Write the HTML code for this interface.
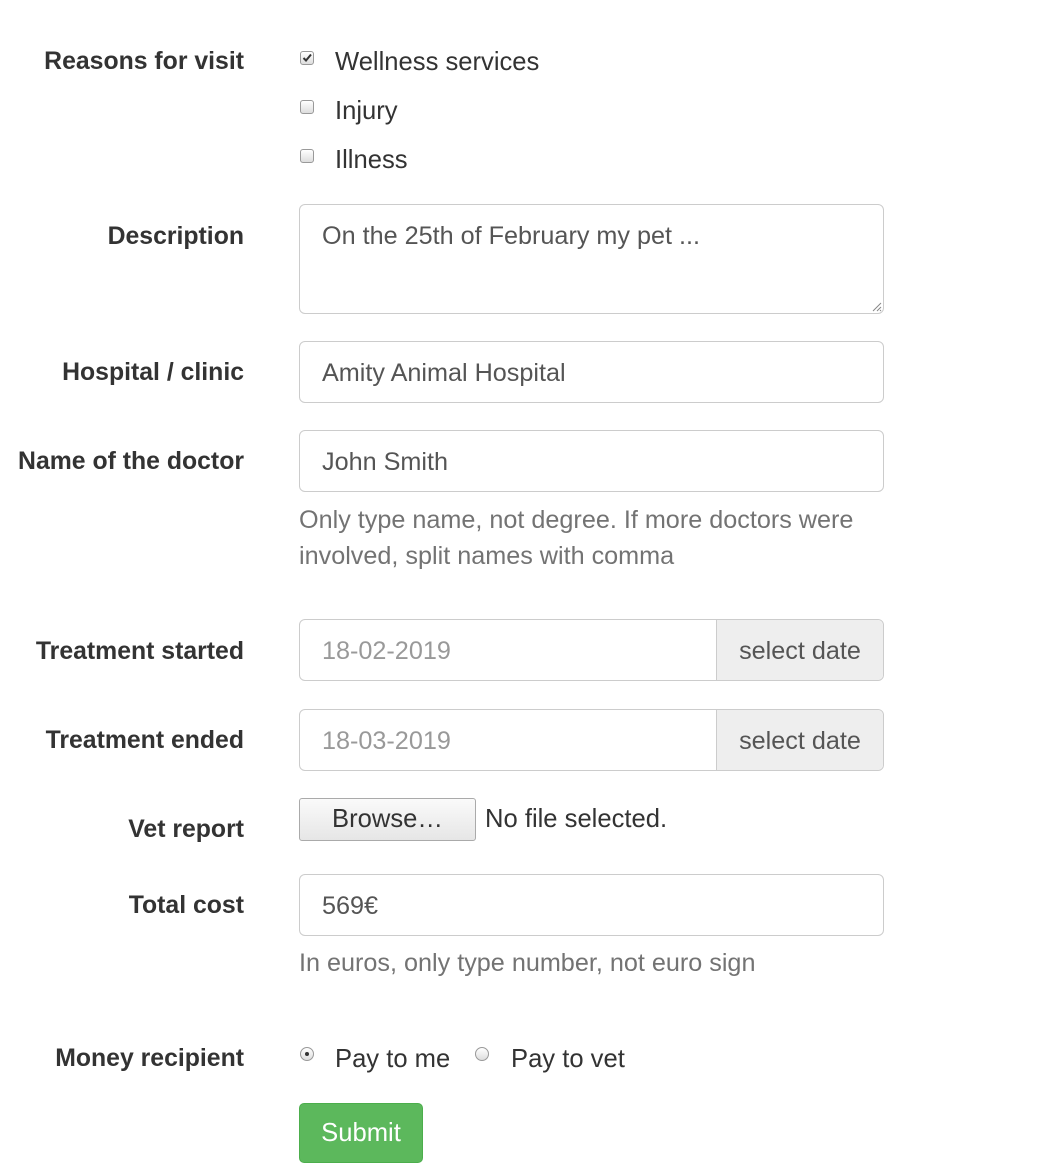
<!DOCTYPE html>
<html><head><style>
body{margin:0;width:1061px;height:1170px;background:#fff;font-family:"Liberation Sans",sans-serif;font-size:25.6px;color:#333;position:relative;overflow:hidden}
.l{position:absolute;right:817px;font-weight:bold;line-height:30px;white-space:nowrap;font-size:24.8px}
.t{position:absolute;line-height:30px;white-space:nowrap}
.in{position:absolute;left:299px;width:583px;height:60px;border:1px solid #ccc;border-radius:6px;box-sizing:content-box;color:#555;font-size:25.2px}
.in span{position:absolute;left:22px;top:16px;line-height:30px}
.cb{position:absolute;left:300px;width:12px;height:12px;border:1px solid #999;border-radius:3px;background:linear-gradient(#fff,#ddd)}
.rb{position:absolute;width:12px;height:12px;border:1px solid #999;border-radius:50%;background:linear-gradient(#fff,#ddd)}
.help{position:absolute;left:299px;color:#737373;line-height:36px;font-size:25.2px}
.addon{position:absolute;right:0;top:0;width:166px;height:60px;background:#eee;border-left:1px solid #ccc;border-radius:0 6px 6px 0;text-align:center;line-height:62px;color:#555}
</style></head><body>
<div class="l" style="top:47px">Reasons for visit</div>
<div class="cb" style="top:51px"><svg width="12" height="12" style="position:absolute;left:0;top:0"><path d="M2.5 6 L5 8.5 L10 2.5" stroke="#333" stroke-width="2" fill="none"/></svg></div>
<div class="t" style="left:335px;top:47px">Wellness services</div>
<div class="cb" style="top:100px"></div>
<div class="t" style="left:335px;top:96px">Injury</div>
<div class="cb" style="top:149px"></div>
<div class="t" style="left:335px;top:145px">Illness</div>

<div class="l" style="top:222px">Description</div>
<div class="in" style="top:204px;height:108px"><span>On the 25th of February my pet ...</span>
<svg width="12" height="12" style="position:absolute;right:1px;bottom:1px"><path d="M11 3L3 11M11 7L7 11M11 10L10 11" stroke="#888" stroke-width="1"/></svg></div>

<div class="l" style="top:358px">Hospital / clinic</div>
<div class="in" style="top:341px"><span>Amity Animal Hospital</span></div>

<div class="l" style="top:447px">Name of the doctor</div>
<div class="in" style="top:430px"><span>John Smith</span></div>
<div class="help" style="top:502px">Only type name, not degree. If more doctors were<br>involved, split names with comma</div>

<div class="l" style="top:637px">Treatment started</div>
<div class="in" style="top:619px"><span style="color:#999">18-02-2019</span><div class="addon">select date</div></div>

<div class="l" style="top:726px">Treatment ended</div>
<div class="in" style="top:709px"><span style="color:#999">18-03-2019</span><div class="addon">select date</div></div>

<div class="l" style="top:815px">Vet report</div>
<div style="position:absolute;left:299px;top:798px;width:175px;height:41px;border:1px solid #aaa;border-radius:3px;background:linear-gradient(#fafafa,#e6e6e6);text-align:center;line-height:40px">Browse…</div>
<div class="t" style="left:485px;top:804px">No file selected.</div>

<div class="l" style="top:891px">Total cost</div>
<div class="in" style="top:874px"><span>569€</span></div>
<div class="help" style="top:945px">In euros, only type number, not euro sign</div>

<div class="l" style="top:1044px">Money recipient</div>
<div class="rb" style="left:300px;top:1047px"><div style="position:absolute;left:4px;top:4px;width:4px;height:4px;border-radius:50%;background:#333"></div></div>
<div class="t" style="left:335px;top:1044px">Pay to me</div>
<div class="rb" style="left:475px;top:1047px"></div>
<div class="t" style="left:511px;top:1044px">Pay to vet</div>

<div style="position:absolute;left:299px;top:1103px;width:122px;height:58px;background:#5cb85c;border:1px solid #4cae4c;border-radius:5px;color:#fff;text-align:center;line-height:59px">Submit</div>
</body></html>
